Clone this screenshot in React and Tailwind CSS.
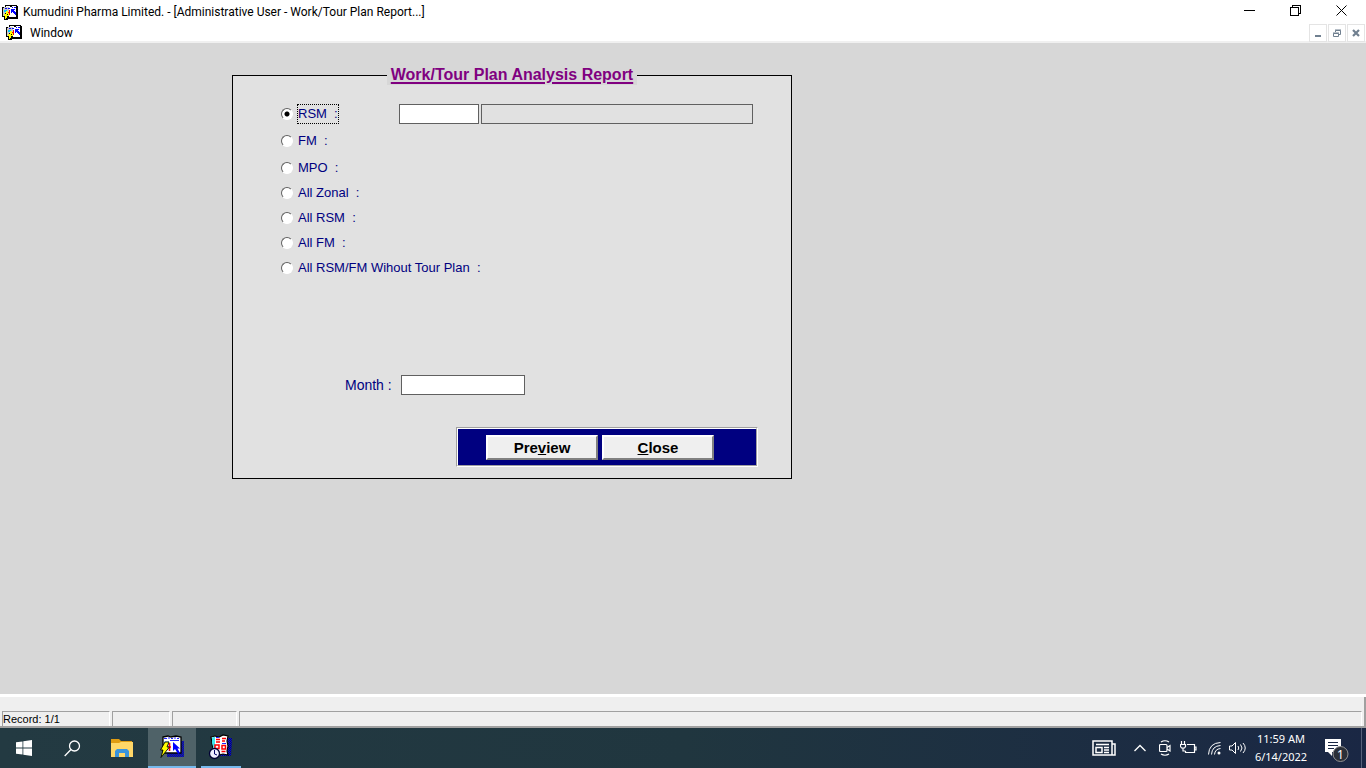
import { useState } from "react";

const options = [
  [
    ["rsm", "RSM  :"],
    ["fm", "FM  :"],
    ["mpo", "MPO  :"],
  ],
  [
    ["all-zonal", "All Zonal  :"],
    ["all-rsm", "All RSM  :"],
    ["all-fm", "All FM  :"],
    ["no-plan", "All RSM/FM Wihout Tour Plan  :"],
  ],
];

function SmallAppIcon() {
  return (
    <svg width="17" height="17" viewBox="0 0 17 17" shapeRendering="crispEdges" aria-hidden="true">
      <path d="M3 1h12v1h1v13H6v1H2v-3H0V3h3z" fill="#000" />
      <path d="M1 4h1v8H1zM2 3h5v9H2z" fill="#c8c8c8" />
      <path d="M7 3h7v10H7z" fill="#fff" />
      <path d="M4 2h4v1H4zM10 2h4v1h-4z" fill="#fff" />
      <path d="M3 4h2v1H3zM6 4h2v1H6zM10 3h1v1h-1zM12 3h2v1h-2z" fill="#00f" />
      <path d="M2 6h3v2H2z" fill="#0cf" />
      <path d="M7 6h1v5H7zM6 8h1v1H6z" fill="#f00" />
      <path d="M9 5h4v1h-1v1h1v1h1v3h-1v-1h-1V9h-1V8h-1v1H9z" fill="#00f" />
      <path d="M4 7h2v2h1v3H5v2H4v1H3v-3H2v-2h2z" fill="#ff0" />
      <path d="M3 9h1v1H3zM5 10h1v1H5z" fill="#000" />
    </svg>
  );
}

function AppIcon() {
  return (
    <svg width="26" height="24" viewBox="0 0 26 24" aria-hidden="true">
      <defs>
        <pattern id="shade" width="2" height="2" patternUnits="userSpaceOnUse">
          <path d="M0 0h1v1H0zM1 1h1v1H1z" fill="#0000e0" />
        </pattern>
      </defs>
      <path d="M8 6h17v16H8z" fill="#00005a" fillOpacity=".55" />
      <path d="M8 6h17v16H8z" fill="url(#shade)" />
      <path d="M4 2l5-1 3 1 5-1 5 1v16H4z" fill="#fff" stroke="#000" strokeWidth="1.3" />
      <path d="M5 3.500h3M9 3h2M12 3.500h2M15 3h2M18 3.500h2M11 5.500h9" stroke="#2222ff" strokeWidth="1.2" />
      <path d="M5 6h5v4H5z" fill="#9adcf0" />
      <path d="M10.500 8v8M9 12h3" stroke="#f00" strokeWidth="1.600" />
      <path d="M14 7v9l2-2 3 5 2-1-2.500-4.500H21z" fill="#00f" />
      <path d="M6 7h4L8 12h2.500L2 22.500l2-7.500H1.500z" fill="#ff0" stroke="#000" strokeWidth=".9" />
    </svg>
  );
}

function DesignerIcon() {
  return (
    <svg width="26" height="26" viewBox="0 0 26 26" aria-hidden="true">
      <path d="M9 4h15l-1 18H9z" fill="#00005a" fillOpacity=".55" />
      <path d="M9 4h15l-1 18H9z" fill="url(#shade)" />
      <path d="M3 3l4-1 4 1 4-2 5 1-1 5 1 5-1 5 1 4-5-1-4 1H4l1-6-1-6z" fill="#fff" stroke="#000" strokeWidth="1.200" />
      <path d="M4 3.500l3-.8V20H5l.5-6L4 9z" fill="#3ee8ee" />
      <path d="M8 5.500h4M14 4.500h4M8 8h4M14 7h3" stroke="#f00" strokeWidth="1.300" />
      <path d="M8 3.500h3M14 9.500h4" stroke="#22f" />
      <path d="M7 11h4v3.500H7zM14 11.500h3.500V15H14zM13.500 17.500h4" fill="none" stroke="#f00" strokeWidth="1.500" />
      <circle cx="6.500" cy="19.500" r="5" fill="#eef" stroke="#003" strokeWidth="1.300" />
      <path d="M6.500 16v4l2.500 1" stroke="#006" fill="none" />
    </svg>
  );
}

function CaptionButton({ label, children }) {
  return (
    <button type="button" aria-label={label} className="flex w-[46px] items-center justify-center">
      <svg width="11" height="11" viewBox="0 0 11 11" fill="none" stroke="#000" shapeRendering="crispEdges" aria-hidden="true">{children}</svg>
    </button>
  );
}

function ChildButton({ label, children }) {
  return (
    <button type="button" aria-label={label} className="flex size-[18px] items-center justify-center border border-[#e4e4e4] bg-white">
      <svg width="10" height="10" viewBox="0 0 10 10" fill="none" stroke="#708090" aria-hidden="true">{children}</svg>
    </button>
  );
}

function PushButton({ children }) {
  return (
    <button type="button" className="h-[25px] w-28 border-2 border-t-white border-r-[#808080] border-b-[#808080] border-l-white bg-[#efefef] text-[15px] leading-5 font-bold text-black">
      {children}
    </button>
  );
}

function Pane({ className, children }) {
  return <div className={"h-[15px] border-t border-l border-[#a0a0a0] border-r border-r-white text-[11px] leading-[15px] " + className}>{children}</div>;
}

export default function App() {
  const [scope, setScope] = useState("rsm");
  return (
    <div className="flex min-h-screen flex-col bg-[#d7d7d7] font-['Liberation_Sans',sans-serif] text-black">
      <header className="bg-white font-['Roboto',sans-serif] text-[12px] leading-4">
        <div className="flex h-6 justify-between pr-0.5 pl-0.5">
          <h1 className="flex items-center gap-1">
            <SmallAppIcon />
            Kumudini Pharma Limited. - [Administrative User - Work/Tour Plan Report...]
          </h1>
          <div className="flex pb-1">
            <CaptionButton label="Minimize"><path d="M0 5.500h11" /></CaptionButton>
            <CaptionButton label="Restore"><path d="M.5 2.500h8v8h-8zM2.500 2.500v-2h8v8h-2" /></CaptionButton>
            <CaptionButton label="Close window"><path d="M.5.500l10 10M10.500.500l-10 10" shapeRendering="auto" /></CaptionButton>
          </div>
        </div>
        <nav className="flex h-[19px] items-center justify-between border-b-2 border-[#f0f0f0] pr-px pl-1.5">
          <button type="button" className="flex items-center gap-[7px]">
            <SmallAppIcon />
            Window
          </button>
          <div className="flex gap-px">
            <ChildButton label="Minimize report"><path d="M2 8h6" strokeWidth="2" /></ChildButton>
            <ChildButton label="Restore report"><path d="M1.500 5.500h5v3h-5zM1 5h6M3.500 4V2.500h5v4H7M3 2h6" /></ChildButton>
            <ChildButton label="Close report"><path d="M2 2l6 6M8 2L2 8" strokeWidth="2.200" /></ChildButton>
          </div>
        </nav>
      </header>

      <main className="flex-1 px-4 pt-[22px] pb-8 md:pl-[232px]">
        <form className="max-w-[560px] text-[#000080]" onSubmit={(e) => e.preventDefault()}>
          <fieldset className="border border-black bg-[#e1e1e1] pb-[11px]">
            <legend className="mx-auto bg-[#d7d7d7] px-1 text-base leading-5 font-bold text-[#800080] underline decoration-2 underline-offset-2">
              Work/Tour Plan Analysis Report
            </legend>
            <div className="flex flex-col gap-[5px] pt-[19px] pr-[38px] pl-12 text-[13px] leading-5">
              {options.map((group, i) => (
                <div key={i} className={i === 0 ? "flex flex-col gap-[7px]" : "flex flex-col gap-[5px]"}>
                  {group.map(([id, text]) => (
                    <div key={id} className="flex h-5 items-center gap-1">
                      <input
                        type="radio"
                        id={id}
                        name="scope"
                        checked={scope === id}
                        onChange={() => setScope(id)}
                        className="size-3 appearance-none rounded-full border border-t-[#606060] border-r-white border-b-white border-l-[#606060] bg-white checked:bg-[radial-gradient(circle,#000_2px,#fff_3px)]"
                      />
                      <label htmlFor={id} className={"border border-dotted leading-[18px] whitespace-pre " + (scope === id ? "border-black" : "border-transparent")}>{text}</label>
                      {id === "rsm" && (
                        <div className="ml-auto flex gap-0.5">
                          <input aria-label="Code" className="h-5 w-20 border border-[#606060] bg-white px-1" />
                          <input aria-label="Name" readOnly className="h-5 w-[272px] border border-[#606060] bg-[#e1e1e1] px-1" />
                        </div>
                      )}
                    </div>
                  ))}
                </div>
              ))}
            </div>
            <div className="mt-[97px] flex items-center gap-[9px] pl-28 text-[14px] leading-5">
              <label htmlFor="month">Month :</label>
              <input id="month" className="h-5 w-[124px] border border-[#606060] bg-white px-1" />
            </div>
            <div className="mt-8 mr-[33px] ml-auto w-[302px] border border-t-[#a0a0a0] border-r-white border-b-white border-l-[#a0a0a0]">
              <div className="flex gap-1 border border-t-white border-r-[#a0a0a0] border-b-[#a0a0a0] border-l-white bg-[#000080] pt-1.5 pb-[5px] pl-7">
                <PushButton>Pre<u>v</u>iew</PushButton>
                <PushButton><u>C</u>lose</PushButton>
              </div>
            </div>
          </fieldset>
        </form>
      </main>

      <footer>
        <div className="border-t-[3px] border-b-2 border-t-white border-b-[#a0a0a0] bg-[#efefef]">
          <div className="flex gap-0.5 border-r-2 border-[#a0a0a0] pt-3.5 pr-0.5 pl-0.5">
            <Pane className="w-[108px]">Record: 1/1</Pane>
            <Pane className="w-[58px]" />
            <Pane className="w-[65px]" />
            <Pane className="flex-1" />
          </div>
        </div>
        <div className="flex h-10 justify-between bg-linear-to-r from-[#233a42] via-[#20363f] to-[#1a2744] font-['Noto_Sans',sans-serif] text-white">
          <div className="flex">
            <button type="button" aria-label="Start" className="flex w-12 items-center justify-center">
              <svg width="16" height="16" viewBox="0 0 16 16" fill="#fff" aria-hidden="true"><path d="M0 2.300l6.500-.9v6.200H0zM7.300 1.200L16 0v7.600H7.300zM0 8.400h6.500v6.200L0 13.700zM7.300 8.400H16V16l-8.700-1.200z" /></svg>
            </button>
            <button type="button" aria-label="Search" className="flex w-12 items-center justify-center">
              <svg width="17" height="17" viewBox="0 0 17 17" fill="none" stroke="#fff" strokeWidth="1.300" aria-hidden="true"><circle cx="10.500" cy="6" r="5" /><path d="M7 9.500L.7 16" /></svg>
            </button>
            <button type="button" aria-label="File Explorer" className="flex w-[52px] items-center justify-center">
              <svg width="22" height="18" viewBox="0 0 22 18" aria-hidden="true"><path d="M0 0h8l2 2h11v4H0z" fill="#e09c12" /><path d="M0 4h8l2-1h12v15H0z" fill="#ffd768" /><path d="M4 18v-6l2-2h10l2 2v6h-4v-4H8v4z" fill="#3a94dc" /></svg>
            </button>
            <button type="button" aria-label="Kumudini Pharma" className="flex w-12 items-center justify-center border-b-2 border-[#76b9ed] bg-[#4f6268]"><AppIcon /></button>
            <button type="button" aria-label="Report designer" className="ml-[5px] flex w-10 items-center justify-center border-b-2 border-[#76b9ed]"><DesignerIcon /></button>
          </div>
          <div className="flex items-center">
            <button type="button" aria-label="News" className="mr-[17px]">
              <svg width="24" height="16" viewBox="0 0 24 16" fill="none" stroke="#fff" strokeWidth="1.500" aria-hidden="true"><path d="M1 1h19v14H1zM20 4h3v11h-3M4 4.500h13M4 7.500h6v5H4zM12 7.500h5M12 10h5M12 12.500h5" /></svg>
            </button>
            <button type="button" aria-label="Show hidden icons" className="mr-3">
              <svg width="14" height="8" viewBox="0 0 14 8" fill="none" stroke="#fff" strokeWidth="1.300" aria-hidden="true"><path d="M1.500 7L7 1.500 12.500 7" /></svg>
            </button>
            <button type="button" aria-label="Meet now" className="mr-[9px]">
              <svg width="12" height="16" viewBox="0 0 12 16" fill="none" stroke="#fff" strokeWidth="1.200" aria-hidden="true"><rect x=".5" y="4.500" width="7.500" height="7" rx="1" /><path d="M8 7.500l3-2v5.500l-3-2M2 2q4-2.500 8 0M2 14q4 2.500 8 0" /></svg>
            </button>
            <button type="button" aria-label="Battery" className="mr-[11px]">
              <svg width="17" height="14" viewBox="0 0 17 14" fill="none" stroke="#fff" strokeWidth="1.200" aria-hidden="true"><path d="M7 3.500h7.500v8H5.500V10M14.500 6H16v3h-1.500M1.500 0v3M4.500 0v3M.5 3.500h5v2l-1 1.500h-3l-1-1.500zM3 7v3h2.500" /></svg>
            </button>
            <button type="button" aria-label="Network" className="mr-2">
              <svg width="13" height="13" viewBox="0 0 13 13" fill="none" stroke="#fff" aria-hidden="true"><path d="M.5 12.500Q1 1 12.500.500M3.500 12.500Q4 4 12.500 3.500M6.500 12.500Q7 7 12.500 6.500" /><circle cx="11" cy="11" r="1.500" fill="#fff" stroke="none" /></svg>
            </button>
            <button type="button" aria-label="Volume" className="mr-1.5">
              <svg width="18" height="14" viewBox="0 0 18 14" fill="none" stroke="#fff" aria-hidden="true"><path d="M.5 5h2.500l3.500-3.500v11L3 9H.5zM9 5q1.500 2 0 4M11.500 3.500q3 3.500 0 7M14 2q4.500 5 0 10" /></svg>
            </button>
            <button type="button" className="mr-3.5 w-14 text-center text-[11px] leading-[18px] whitespace-nowrap">
              11:59 AM<br />6/14/2022
            </button>
            <button type="button" aria-label="Notifications: 1" className="mr-2.5">
              <svg width="28" height="28" viewBox="0 0 28 28" aria-hidden="true"><path d="M2 5h16v13h-9v4l-4-4H2z" fill="#fff" /><path d="M5 8.500h10M5 11.500h10M5 14.500h6" stroke="#1a2744" /><circle cx="17.500" cy="20" r="7.500" fill="#2b3039" stroke="#929292" /><text x="17.500" y="24.500" fill="#fff" fontSize="12" textAnchor="middle">1</text></svg>
            </button>
            <div className="h-full w-[5px] border-l border-[#56617a]" />
          </div>
        </div>
      </footer>
    </div>
  );
}
